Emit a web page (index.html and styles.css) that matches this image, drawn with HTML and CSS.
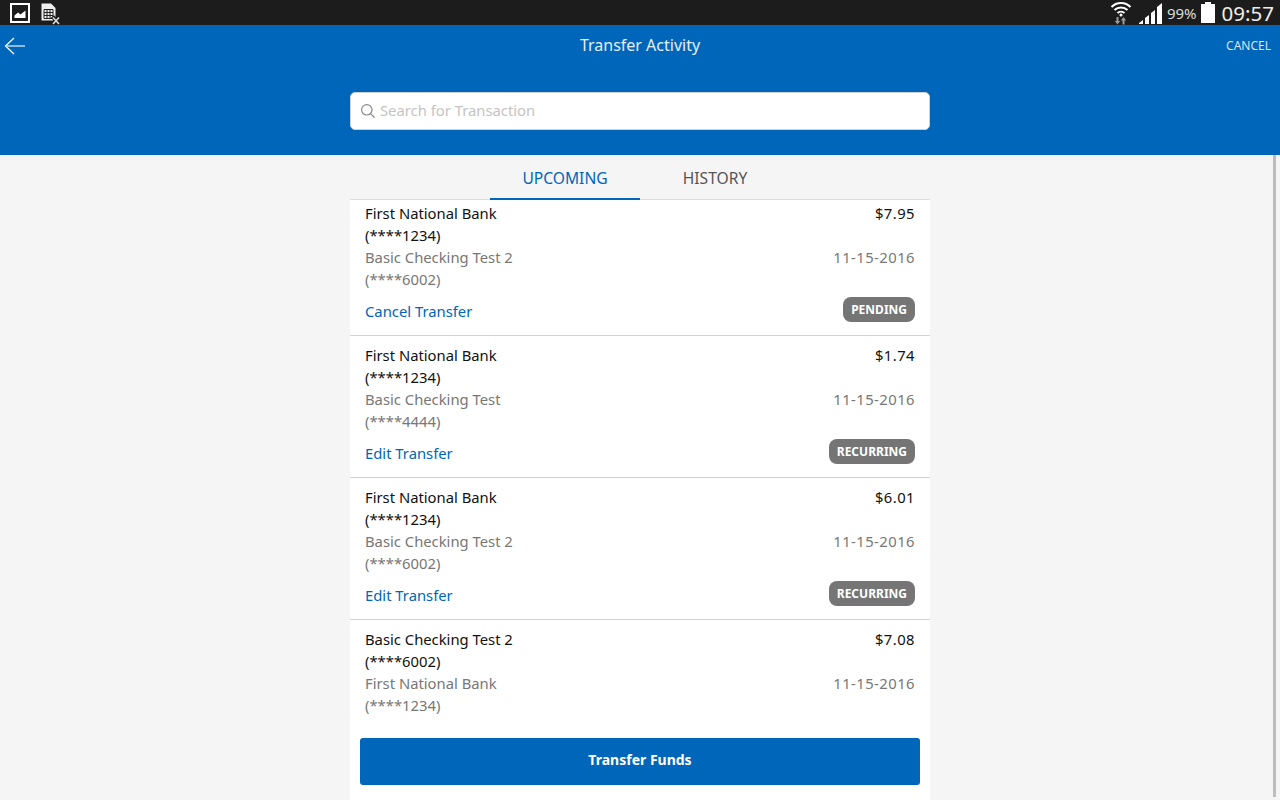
FILE: index.html
```html
<!DOCTYPE html>
<html lang="en">
<head>
    <meta charset="UTF-8">
    <meta name="viewport" content="width=device-width, initial-scale=1.0">
    <title>Transfer Activity</title>
    <link rel="stylesheet" href="styles.css">
</head>
<body>
    <div class="statusbar">
        <div class="status-left">
            <svg class="pic-icon" width="20" height="20" viewBox="0 0 20 20">
                <rect x="1" y="1" width="18" height="18" fill="none" stroke="#fff" stroke-width="2"/>
                <path d="M4.500 15 V12.500 L8 9.500 L10.500 11.500 L15.500 7.500 V15 Z" fill="#fff"/>
            </svg>
            <svg class="sheet-icon" width="20" height="22" viewBox="0 0 20 22">
                <path d="M0.500 0.500 H10 L14.500 5 V17.500 H0.500 Z" fill="#eee"/>
                <path d="M3 6.500 H12 V15.500 H3 Z M6 6.500 V15.500 M9 6.500 V15.500 M3 9.500 H12 M3 12.500 H12" fill="none" stroke="#222" stroke-width="1"/>
                <path d="M11.500 13.500 L18.500 21.500 M18.500 13.500 L11.500 21.500" stroke="#1c1c1c" stroke-width="4"/>
                <path d="M12 14.500 L18 21 M18 14.500 L12 21" stroke="#ddd" stroke-width="1.600"/>
            </svg>
        </div>
        <div class="status-right">
            <svg class="wifi-icon" width="22" height="24" viewBox="0 0 22 24">
                <path d="M1.500 6 C6.500 0.500 15.500 0.500 20.500 6" fill="none" stroke="#fff" stroke-width="2"/>
                <path d="M4.500 9 C8 5.500 14 5.500 17.500 9" fill="none" stroke="#fff" stroke-width="2"/>
                <path d="M7.500 12 C9.500 10.200 12.500 10.200 14.500 12" fill="none" stroke="#fff" stroke-width="2"/>
                <circle cx="11" cy="14" r="1.500" fill="#fff"/>
                <path d="M6.500 16 H8.500 V20 H10.200 L7.500 23.500 L4.800 20 H6.500 Z" fill="#999"/>
                <path d="M13.500 16 L16.200 19.500 H14.500 V23.500 H12.500 V19.500 H10.800 Z" fill="#999"/>
            </svg>
            <svg class="signal-icon" width="24" height="24" viewBox="0 0 24 24">
                <path d="M0 22 L4 19 V23 H0 Z M6 17 L10 14 V23 H6 Z M12 12 L16 9 V23 H12 Z M18 6 L23 2 V23 H18 Z" fill="#fff"/>
            </svg>
            <span class="battery-text">99%</span>
            <div class="battery"><div class="battery-cap"></div><div class="battery-body"></div></div>
            <span class="clock">09:57</span>
        </div>
    </div>

    <div class="header">
        <div class="header-top">
            <svg class="back-icon" width="22" height="18" viewBox="0 0 22 18">
                <path d="M10 1 L1.500 9 L10 17" fill="none" stroke="#fff" stroke-width="1.200"/>
                <path d="M2 9 H21" stroke="#cfe0f2" stroke-width="1.400"/>
            </svg>
            <div class="header-title">Transfer Activity</div>
            <div class="header-cancel">CANCEL</div>
        </div>
        <div class="search">
            <svg width="16" height="16" viewBox="0 0 16 16">
                <circle cx="6.800" cy="6.800" r="5.200" fill="none" stroke="#8a8a8a" stroke-width="1.200"/>
                <path d="M10.600 10.600 L14.500 14.500" stroke="#8a8a8a" stroke-width="1.200"/>
            </svg>
            <span class="search-text">Search for Transaction</span>
        </div>
    </div>

    <div class="main">
        <div class="panel">
            <div class="tabs">
                <div class="tab active">UPCOMING</div>
                <div class="tab">HISTORY</div>
            </div>
            <div class="list">
                <div class="row first">
                    <div class="line"><span>First National Bank</span><span>$7.95</span></div>
                    <div class="line"><span>(****1234)</span></div>
                    <div class="line muted"><span>Basic Checking Test 2</span><span>11-15-2016</span></div>
                    <div class="line muted"><span>(****6002)</span></div>
                    <div class="line action"><a>Cancel Transfer</a><span class="badge">PENDING</span></div>
                </div>
                <div class="row">
                    <div class="line"><span>First National Bank</span><span>$1.74</span></div>
                    <div class="line"><span>(****1234)</span></div>
                    <div class="line muted"><span>Basic Checking Test</span><span>11-15-2016</span></div>
                    <div class="line muted"><span>(****4444)</span></div>
                    <div class="line action"><a>Edit Transfer</a><span class="badge">RECURRING</span></div>
                </div>
                <div class="row">
                    <div class="line"><span>First National Bank</span><span>$6.01</span></div>
                    <div class="line"><span>(****1234)</span></div>
                    <div class="line muted"><span>Basic Checking Test 2</span><span>11-15-2016</span></div>
                    <div class="line muted"><span>(****6002)</span></div>
                    <div class="line action"><a>Edit Transfer</a><span class="badge">RECURRING</span></div>
                </div>
                <div class="row last">
                    <div class="line"><span>Basic Checking Test 2</span><span>$7.08</span></div>
                    <div class="line"><span>(****6002)</span></div>
                    <div class="line muted"><span>First National Bank</span><span>11-15-2016</span></div>
                    <div class="line muted"><span>(****1234)</span></div>
                </div>
            </div>
            <div class="footer">
                <button class="transfer-btn">Transfer Funds</button>
            </div>
        </div>
        <div class="scrollbar"></div>
    </div>
</body>
</html>
```

FILE: styles.css
```css
* {
  margin: 0px;
  padding: 0px;
  box-sizing: border-box;
}

html,
body {
  height: 800px;
  overflow: hidden;
}

body {
  font-family: "Noto Sans", sans-serif;
  font-size: 14.800px;
  background-color: #f5f5f5;
  display: flex;
  flex-direction: column;
}

.statusbar {
  height: 25px;
  background-color: #1c1c1c;
  color: #fff;
  display: flex;
  justify-content: space-between;
  align-items: center;
  padding: 0 6px 0 10px;
}

.status-left,
.status-right {
  display: flex;
  align-items: center;
}

.sheet-icon {
  margin-left: 11px;
  margin-top: 2px;
}

.signal-icon {
  margin-left: 7px;
}

.battery-text {
  font-size: 15px;
  color: #ddd;
  margin-left: 4px;
}

.battery {
  width: 14px;
  margin-left: 4px;
}

.battery-cap {
  width: 6px;
  height: 2px;
  margin: 0 auto;
  background-color: #fff;
}

.battery-body {
  height: 19px;
  background-color: #fff;
}

.clock {
  font-size: 20.500px;
  color: #eee;
  margin-left: 7px;
}

.header {
  height: 130px;
  background-color: #0066ba;
  color: #fff;
  padding-top: 8px;
}

.header-top {
  display: grid;
  grid-template-columns: 1fr auto 1fr;
  align-items: center;
  height: 24px;
  padding: 0 9px;
}

.back-icon {
  margin: 2px 0 0 -5px;
}

.header-title {
  font-size: 16px;
  color: #e4eef8;
}

.header-cancel {
  font-size: 12px;
  color: #d5e4f3;
  justify-self: end;
}

.search {
  width: 580px;
  height: 38px;
  margin: 35px auto 0;
  background-color: #fff;
  border: 1px solid #d0d0d0;
  border-radius: 5px;
  display: flex;
  align-items: center;
  padding-left: 9px;
  gap: 4px;
  color: #c4c4c4;
  font-size: 14.800px;
}

.search-text {
  padding-bottom: 2px;
}

.main {
  flex: 1;
  min-height: 0;
  display: flex;
  justify-content: center;
  position: relative;
}

.panel {
  width: 580px;
  display: flex;
  flex-direction: column;
}

.tabs {
  height: 45px;
  display: flex;
  justify-content: center;
  border-bottom: 1px solid #dcdcdc;
  flex-shrink: 0;
}

.tab {
  width: 150px;
  height: 45px;
  line-height: 47px;
  text-align: center;
  font-size: 15.600px;
  color: #555;
}

.tab.active {
  color: #0066ba;
  border-bottom: 2px solid #0066ba;
}

.list {
  background-color: #fff;
  flex: 1;
}

.row {
  height: 142px;
  padding: 8px 15px 0;
  border-bottom: 1px solid #d2d2d2;
}

.row.first {
  height: 136px;
  padding-top: 2px;
}

.row.last {
  height: auto;
  border-bottom: none;
}

.line {
  height: 22px;
  line-height: 22px;
  display: flex;
  justify-content: space-between;
  color: #111;
}

.line span + span {
  letter-spacing: 0.450px;
}

.line.muted {
  color: #777;
}

.line.action {
  height: 26px;
  margin-top: 8px;
  align-items: center;
}

.line a {
  color: #0066ba;
}

.line .badge {
  height: 25px;
  line-height: 25px;
  padding: 0 8px;
  margin-bottom: 4px;
  border-radius: 8px;
  background-color: #757575;
  color: #fff;
  font-size: 12px;
  font-weight: 700;
  letter-spacing: 0;
}

.footer {
  background-color: #fff;
  height: 62px;
  padding: 0 10px;
}

.transfer-btn {
  width: 100%;
  height: 47px;
  padding-bottom: 5px;
  background-color: #0066ba;
  border: none;
  border-radius: 3px;
  color: #fff;
  font-family: inherit;
  font-size: 14px;
  font-weight: 700;
}

.scrollbar {
  position: absolute;
  right: 4px;
  top: 0;
  bottom: 3px;
  width: 3px;
  background-color: #bdbdbd;
}
```
